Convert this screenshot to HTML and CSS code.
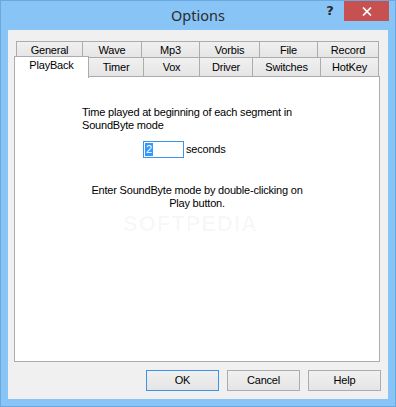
FILE: index.html
```html
<!DOCTYPE html>
<html lang="en">
<head>
    <meta charset="UTF-8">
    <title>Options</title>
    <link rel="stylesheet" href="styles.css">
</head>
<body>
    <div class="window">
        <div class="titlebar">
            <span class="title">Options</span>
            <span class="help-btn">?</span>
            <span class="close-btn">
                <svg width="10" height="9" viewBox="0 0 10 9">
                    <path d="M1 0.5 L9 8.5 M9 0.5 L1 8.5" stroke="#fff" stroke-width="1.7" fill="none"/>
                </svg>
            </span>
        </div>
        <div class="client">
            <div class="tabs">
                <div class="tab-row back">
                    <div class="tab w-general">General</div>
                    <div class="tab w-wave">Wave</div>
                    <div class="tab w-mp3">Mp3</div>
                    <div class="tab w-vorbis">Vorbis</div>
                    <div class="tab w-file">File</div>
                    <div class="tab w-record">Record</div>
                </div>
                <div class="tab-row front">
                    <div class="tab selected w-playback">PlayBack</div>
                    <div class="tab w-timer">Timer</div>
                    <div class="tab w-vox">Vox</div>
                    <div class="tab w-driver">Driver</div>
                    <div class="tab w-switches">Switches</div>
                    <div class="tab w-hotkey">HotKey</div>
                </div>
            </div>
            <div class="panel">
                <p class="intro">Time played at beginning of each segment in<br>SoundByte mode</p>
                <div class="seconds-row">
                    <div class="num-input"><span class="sel">2</span></div>
                    <span>seconds</span>
                </div>
                <p class="hint">Enter SoundByte mode by double-clicking on<br>Play button.</p>
                <div class="watermark">SOFTPEDIA</div>
            </div>
            <div class="buttons">
                <button class="btn default">OK</button>
                <button class="btn">Cancel</button>
                <button class="btn">Help</button>
            </div>
        </div>
    </div>
</body>
</html>
```

FILE: styles.css
```css
:root {
    --frame: #89c4f6;
    --frame-edge: #6aa8e0;
    --face: #f0f0f0;
    --line: #acacac;
    --focus: #3c94e8;
}
* { box-sizing: border-box; margin: 0; padding: 0; }
body {
    width: 396px;
    height: 407px;
    font-family: 'Liberation Sans', Arial, sans-serif;
    font-size: 11px;
    line-height: 13px;
    letter-spacing: -0.2px;
    color: #000;
    overflow: hidden;
}
.window {
    width: 396px;
    height: 407px;
    background: var(--frame);
    border: 1px solid var(--frame-edge);
    display: flex;
    flex-direction: column;
}

/* title bar */
.titlebar {
    height: 29px;
    display: flex;
    align-items: flex-start;
}
.title {
    flex: 1;
    padding-left: 75px;
    text-align: center;
    font-family: 'Noto Sans', 'Open Sans', sans-serif;
    font-size: 14.5px;
    line-height: 29px;
    letter-spacing: 0;
    color: #2b2b2b;
}
.help-btn {
    width: 20px;
    margin-right: 4px;
    height: 20px;
    text-align: center;
    font-family: 'DejaVu Sans', sans-serif;
    font-weight: bold;
    font-size: 13px;
    line-height: 20px;
    color: #2a2a2a;
}
.close-btn {
    width: 45px;
    height: 20px;
    margin-right: 6px;
    background: #c75050;
    display: flex;
    align-items: center;
    justify-content: center;
}

/* client area */
.client {
    margin: 0 7px;
    height: 369px;
    background: var(--face);
    padding-top: 11px;
}
.tab-row { display: flex; align-items: flex-start; }
.tab-row.back { margin-left: 8px; }
.tab-row.front { margin-left: 6px; margin-top: -1px; }
.tab {
    border: 1px solid var(--line);
    background: linear-gradient(#f0f0f0, #e5e5e5);
    display: flex;
    justify-content: center;
    white-space: nowrap;
}
.tab + .tab { margin-left: -1px; }
.back .tab { height: 17px; padding-top: 2px; }
.front .tab { height: 20px; padding-top: 3px; }
.front .tab.selected {
    position: relative;
    z-index: 1;
    height: 22px;
    margin-top: -1px;
    margin-bottom: -2px;
    padding-top: 2px;
    background: #fff;
    border-bottom: none;
}
.w-general { width: 67px; }
.w-wave { width: 60px; }
.w-mp3 { width: 59px; }
.w-vorbis { width: 61px; }
.w-file { width: 59px; }
.w-record { width: 62px; }
.w-playback { width: 75px; }
.w-timer { width: 56px; }
.w-vox { width: 57px; }
.w-driver { width: 54px; }
.w-switches { width: 69px; }
.w-hotkey { width: 59px; }

.panel {
    position: relative;
    margin: -1px 0 0 6px;
    width: 366px;
    height: 286px;
    background: #fff;
    border: 1px solid var(--line);
    padding-top: 29px;
}
.intro { margin-left: 67px; }
.seconds-row {
    margin: 9px 0 0 128px;
    display: flex;
    align-items: center;
    gap: 2px;
}
.num-input {
    width: 41px;
    height: 17px;
    border: 1px solid var(--focus);
    padding: 1px 0 0 1px;
}
.sel {
    display: inline-block;
    background: #3399ff;
    color: #fff;
    padding: 0 1px;
    line-height: 13px;
}
.hint {
    margin-top: 26px;
    text-align: center;
}
.watermark {
    position: absolute;
    left: 108px;
    top: 136px;
    font-size: 22px;
    line-height: 22px;
    font-weight: bold;
    letter-spacing: 1px;
    color: rgba(0, 0, 0, 0.035);
    pointer-events: none;
}

/* dialog buttons */
.buttons {
    margin-top: 8px;
    padding-right: 7px;
    display: flex;
    justify-content: flex-end;
    gap: 8px;
}
.btn {
    width: 73px;
    height: 21px;
    border: 1px solid var(--line);
    background: linear-gradient(#f0f0f0, #e5e5e5);
    font-family: 'Liberation Sans', Arial, sans-serif;
    font-size: 11px;
    line-height: 13px;
    letter-spacing: -0.2px;
    color: #000;
}
.btn.default { border-color: var(--focus); }
```
